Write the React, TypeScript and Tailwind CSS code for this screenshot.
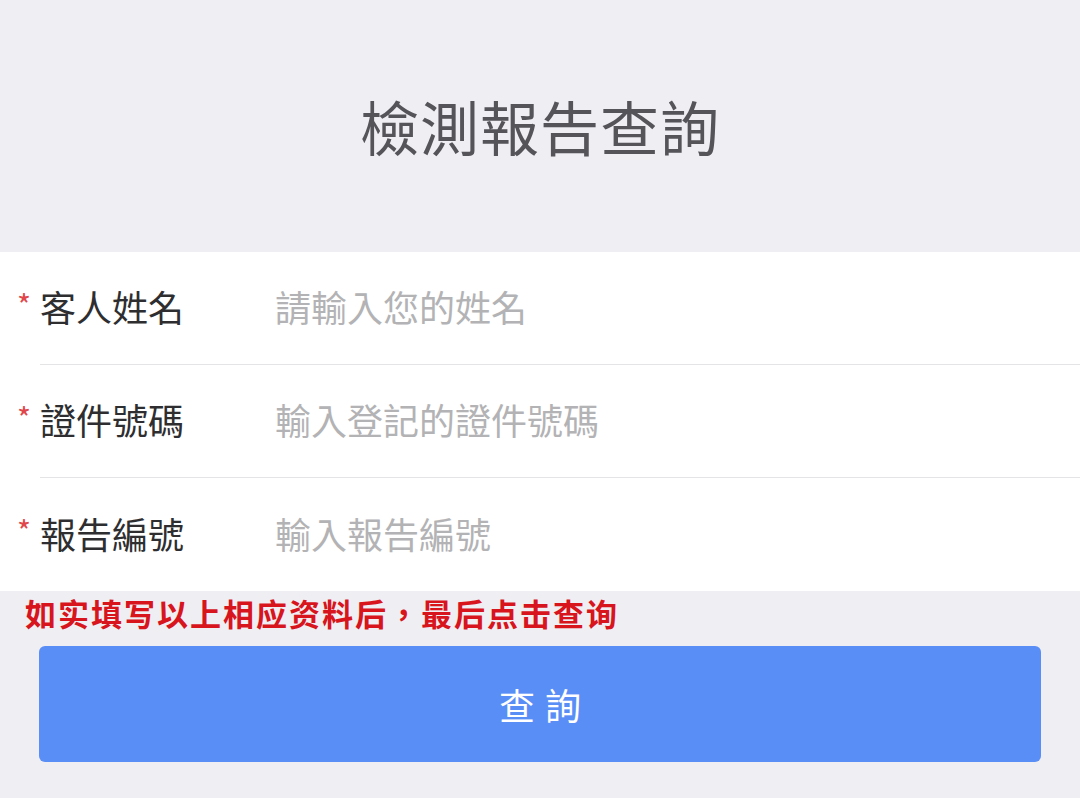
import React from 'react';

const fields = [
  { label: '客人姓名', placeholder: '請輸入您的姓名' },
  { label: '證件號碼', placeholder: '輸入登記的證件號碼' },
  { label: '報告編號', placeholder: '輸入報告編號' },
];

export default function App() {
  return (
    <div
      className="w-[1080px] h-[798px] bg-[#efeef3] flex flex-col overflow-hidden"
      style={{ fontFamily: '"Noto Sans CJK TC", "Noto Sans CJK SC", sans-serif' }}
    >
      {/* 標題 */}
      <div className="h-[252px] flex items-center justify-center pb-[2px]">
        <h1 className="text-[59px] leading-none text-[#555458] tracking-[1px]">檢測報告查詢</h1>
      </div>

      {/* 表單 */}
      <div className="bg-white flex flex-col">
        {fields.map((f, i) => (
          <div key={f.label} className="flex items-stretch h-[113px]">
            <div className="w-[40px] flex items-center justify-end pr-[9px] pb-[10px]">
              <span className="text-[#e0474b] text-[30px] leading-none">*</span>
            </div>
            <div
              className={`flex-1 flex items-center pb-[4px] ${
                i < fields.length - 1 ? 'border-b border-[#e4e4e6]' : ''
              }`}
            >
              <span className="w-[235px] text-[36px] text-[#2e2e30] leading-none">{f.label}</span>
              <input
                className="flex-1 text-[36px] text-[#333] placeholder:text-[#b3b3b5] outline-none bg-transparent leading-none"
                placeholder={f.placeholder}
              />
            </div>
          </div>
        ))}
      </div>

      {/* 提示 */}
      <div className="pl-[25px] pt-[6px] h-[55px]">
        <span className="text-[31px] leading-none font-bold text-[#d8141c] tracking-[2px]">
          如实填写以上相应资料后，最后点击查询
        </span>
      </div>

      {/* 按鈕 */}
      <div className="px-[39px]">
        <button className="w-full h-[116px] rounded-[6px] bg-[#5a8ef7] text-white text-[36px] leading-none tracking-[10px] pl-[10px]">
          查詢
        </button>
      </div>
    </div>
  );
}
